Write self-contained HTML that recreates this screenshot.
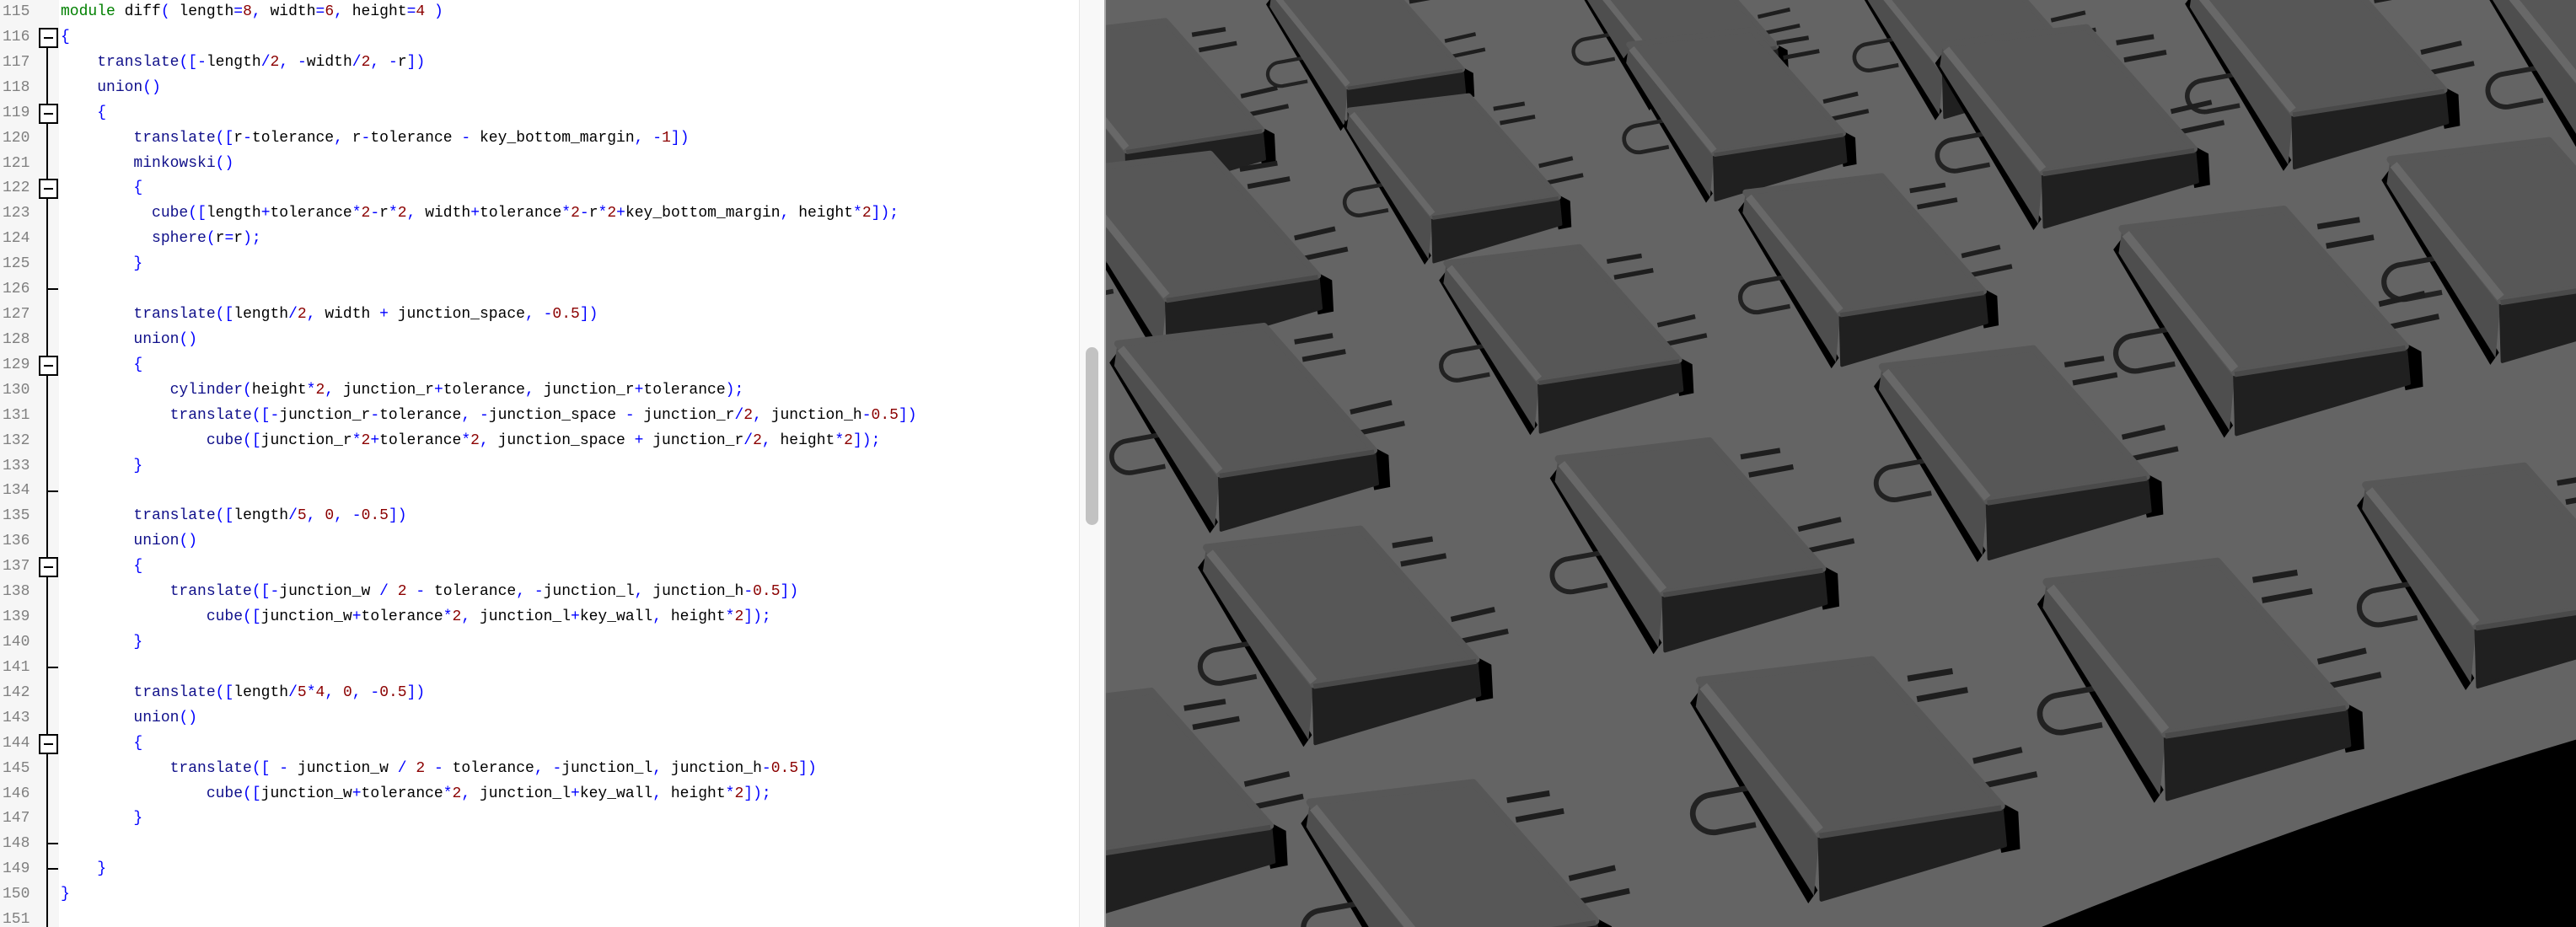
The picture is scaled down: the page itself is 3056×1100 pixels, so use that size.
<!DOCTYPE html>
<html><head><meta charset="utf-8">
<style>
html,body{margin:0;padding:0;width:3056px;height:1100px;overflow:hidden;background:#fff;position:relative;}
#ed{position:absolute;left:0;top:0;width:1280px;height:1100px;background:#fff;overflow:hidden;}
#gut{position:absolute;left:0;top:0;width:70px;height:1100px;background:#f6f6f6;}
.ln{position:absolute;left:3px;width:40px;height:3px;overflow:visible;font:18px "Liberation Mono",monospace;color:#808080;line-height:30px;white-space:pre;}
.cl{position:absolute;left:72px;height:3px;overflow:visible;font:18px "Liberation Mono",monospace;color:#000;line-height:30px;white-space:pre;}
.k{color:#008000}.f{color:#10108a}.p{color:#0000ff}.n{color:#8b0000}
#fold{position:absolute;left:55px;top:40px;width:2px;height:1060px;background:#000;}
.box{position:absolute;z-index:3;left:46px;width:19px;height:20px;border:2px solid #000;background:#fff;}
.box i{position:absolute;left:4px;top:9px;width:11px;height:2px;background:#000;}
.tick{position:absolute;left:55px;width:14px;height:2px;background:#000;}
#track{position:absolute;left:1280px;top:0;width:31px;height:1100px;background:#f8f8f8;border-left:1px solid #e6e6e6;box-sizing:border-box;}
#thumb{position:absolute;left:1288px;top:412px;width:15px;height:211px;border-radius:8px;background:#c2c2c2;}
#sep{position:absolute;left:1310px;top:0;width:2px;height:1100px;background:#a8a8a8;}
#view{position:absolute;display:block;left:1312px;top:0;width:1744px;height:1100px;}
</style></head><body>
<div id="ed"><div id="gut"></div><div id="code"></div><div id="fold"></div><div id="marks"></div></div>
<div id="track"></div><div id="thumb"></div><div id="sep"></div>
<svg id="view" viewBox="674 0 894 564" preserveAspectRatio="none" xmlns="http://www.w3.org/2000/svg">
<defs>
<g id="key">
  <path d="M-5 12 L1 4 L63 112 L58 119 Z" fill="#000"/>
  <path d="M155 62 L170 70 L171 90 L161 92 Z" fill="#000"/>
  <path d="M28 57 L6 61 A11 10 0 0 0 9 81 L30 77" fill="none" stroke="#222" stroke-width="3"/>
  <path d="M111 -1 L135 -5 M116 10 L143 5 M146 43 L172 37 M152 56 L180 50" stroke="#1e1e1e" stroke-width="3.2"/>
  <path d="M0 0 L-2 14 L61 115 L64 82 Z" fill="#4e4e4e"/>
  <path d="M64 82 L161 67 L163 88 L65 117 Z" fill="#202020" stroke="#202020" stroke-width="2" stroke-linejoin="round"/>
  <path d="M0 0 L92 -11 L161 67 L64 82 Z" fill="#575757" stroke="#575757" stroke-width="4" stroke-linejoin="round"/>
  <path d="M2 3 L64 80" stroke="#686868" stroke-width="5"/>
  <path d="M64 83 L161 68" stroke="#4a4a4a" stroke-width="3"/>
</g>
</defs>
<rect x="600" y="0" width="1000" height="600" fill="#646464"/>
<use href="#key" transform="translate(775,-6) scale(.72)"/>
<use href="#key" transform="translate(961,-22) scale(.75)"/>
<use href="#key" transform="translate(1132,-22) scale(.8)"/>
<use href="#key" transform="translate(1335,-9) scale(.95)"/>
<use href="#key" transform="translate(1518,-16) scale(1)"/>
<use href="#key" transform="translate(632,22) scale(.85)"/>
<use href="#key" transform="translate(992,27) scale(.81)"/>
<use href="#key" transform="translate(1183,27) scale(.95)"/>
<use href="#key" transform="translate(822,67) scale(.79)"/>
<use href="#key" transform="translate(650,104) scale(.95)"/>
<use href="#key" transform="translate(1455,97) scale(1.05)"/>
<use href="#key" transform="translate(1063,117) scale(.9)"/>
<use href="#key" transform="translate(1292,139) scale(1.07)"/>
<use href="#key" transform="translate(881,160) scale(.88)"/>
<use href="#key" transform="translate(681,209) scale(.97)"/>
<use href="#key" transform="translate(1146,223) scale(1)"/>
<use href="#key" transform="translate(1440,295) scale(1.05)"/>
<use href="#key" transform="translate(949,279) scale(1)"/>
<use href="#key" transform="translate(735,333) scale(1.02)"/>
<use href="#key" transform="translate(1246,354) scale(1.13)"/>
<use href="#key" transform="translate(605,432) scale(1.05)"/>
<use href="#key" transform="translate(1035,414) scale(1.14)"/>
<use href="#key" transform="translate(798,488) scale(1.08)"/>
<path d="M1568 450 Q1400 500 1243 564 L1568 564 Z" fill="#000"/>
</svg>
<script>
var L=[
"module diff( length=8, width=6, height=4 )",
"{",
"    translate([-length/2, -width/2, -r])",
"    union()",
"    {",
"        translate([r-tolerance, r-tolerance - key_bottom_margin, -1])",
"        minkowski()",
"        {",
"          cube([length+tolerance*2-r*2, width+tolerance*2-r*2+key_bottom_margin, height*2]);",
"          sphere(r=r);",
"        }",
"",
"        translate([length/2, width + junction_space, -0.5])",
"        union()",
"        {",
"            cylinder(height*2, junction_r+tolerance, junction_r+tolerance);",
"            translate([-junction_r-tolerance, -junction_space - junction_r/2, junction_h-0.5])",
"                cube([junction_r*2+tolerance*2, junction_space + junction_r/2, height*2]);",
"        }",
"",
"        translate([length/5, 0, -0.5])",
"        union()",
"        {",
"            translate([-junction_w / 2 - tolerance, -junction_l, junction_h-0.5])",
"                cube([junction_w+tolerance*2, junction_l+key_wall, height*2]);",
"        }",
"",
"        translate([length/5*4, 0, -0.5])",
"        union()",
"        {",
"            translate([ - junction_w / 2 - tolerance, -junction_l, junction_h-0.5])",
"                cube([junction_w+tolerance*2, junction_l+key_wall, height*2]);",
"        }",
"",
"    }",
"}",
""];
var F={translate:1,union:1,minkowski:1,cube:1,sphere:1,cylinder:1};
function esc(s){return s.replace(/&/g,"&amp;").replace(/</g,"&lt;");}
var h="",m="",LH=29.92;
for(var i=0;i<L.length;i++){
  var y=(i*LH-1).toFixed(2);
  h+='<div class="ln" style="top:'+y+'px">'+(115+i)+'</div>';
  var s=L[i],o="";
  s.replace(/([A-Za-z_][A-Za-z_0-9]*)|([0-9]+(?:\.[0-9]+)?)|([()\[\]{},=+\-*\/;])|(\s+)/g,function(mm,id,num,p,ws){
    if(id){ if(id=="module")o+='<span class="k">'+id+'</span>'; else if(F[id])o+='<span class="f">'+id+'</span>'; else o+=id;}
    else if(num)o+='<span class="n">'+num+'</span>';
    else if(p)o+='<span class="p">'+esc(p)+'</span>';
    else o+=ws;
    return mm;});
  h+='<div class="cl" style="top:'+y+'px">'+o+'</div>';
}
[116,119,122,129,137,144].forEach(function(n){m+='<div class="box" style="top:'+((n-115)*LH+3).toFixed(1)+'px"><i></i></div>';});
[126,134,141,148,149].forEach(function(n){m+='<div class="tick" style="top:'+((n-115)*LH+13).toFixed(1)+'px"></div>';});
document.getElementById("code").innerHTML=h;
document.getElementById("marks").innerHTML=m;
</script>
</body></html>
